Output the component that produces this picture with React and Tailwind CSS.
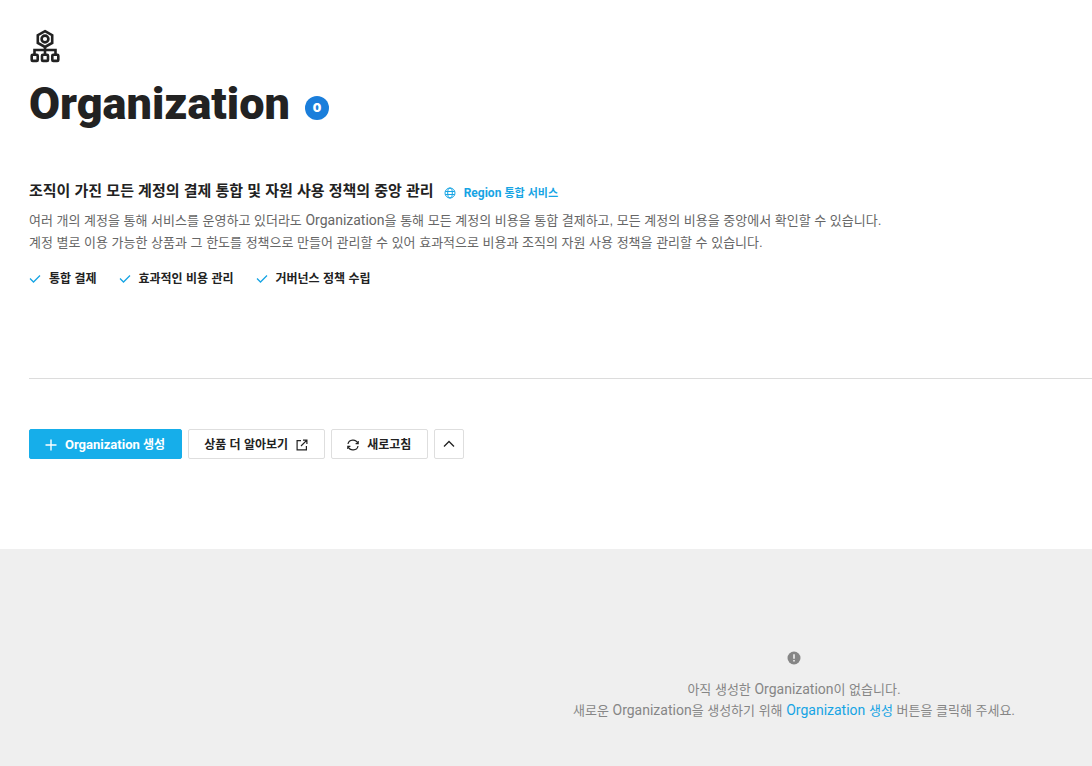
const features = ['통합 결제', '효과적인 비용 관리', '거버넌스 정책 수립'];

const buttonBase = 'flex h-[30px] items-center gap-2 rounded-xs border pt-px pr-4 pl-[15px] text-xs font-bold';
const plainButton = `${buttonBase} border-[#dedede] bg-white text-[#222]`;

function OrganizationIcon() {
  return (
    <svg width="32" height="34" viewBox="0 0 32 34" fill="none" stroke="#222" strokeWidth="2.6" aria-hidden="true">
      <path d="M16 2.200l7.200 4v7.800l-7.200 4-7.200-4V6.200z" />
      <circle cx="16" cy="10" r="3.4" />
      <path d="M16 18v7M5.500 25.500v-4.500h21v4.500" />
      <rect x="2.700" y="25.700" width="6" height="6.200" rx="1" />
      <rect x="13" y="25.700" width="6" height="6.200" rx="1" />
      <rect x="23.300" y="25.700" width="6" height="6.200" rx="1" />
    </svg>
  );
}

function GlobeIcon() {
  return (
    <svg width="12" height="12" viewBox="0 0 12 12" fill="none" stroke="currentColor" aria-hidden="true">
      <circle cx="6" cy="6" r="5" />
      <ellipse cx="6" cy="6" rx="2.300" ry="5" />
      <path d="M1.300 4.500h9.400M1.300 7.500h9.400" />
    </svg>
  );
}

function CheckIcon() {
  return (
    <svg width="12" height="12" viewBox="0 0 12 12" fill="none" stroke="#16a4e4" strokeWidth="1.300" aria-hidden="true">
      <path d="M1 5.500L4.500 9 11 2.500" />
    </svg>
  );
}

function PlusIcon() {
  return (
    <svg width="12" height="12" viewBox="0 0 12 12" fill="none" stroke="currentColor" strokeWidth="1.400" aria-hidden="true">
      <path d="M6 .5v11M.5 6h11" />
    </svg>
  );
}

function ExternalIcon() {
  return (
    <svg width="12" height="12" viewBox="0 0 12 12" fill="none" stroke="currentColor" strokeWidth="1.200" aria-hidden="true">
      <path d="M5 1.600H1.100v9.300h9.300V7M7 1.100h3.900V5M10.900 1.100L5 7" />
    </svg>
  );
}

function RefreshIcon() {
  return (
    <svg width="12" height="12" viewBox="0 0 12 12" fill="none" stroke="currentColor" strokeWidth="1.200" aria-hidden="true">
      <path d="M1 5a5 4.600 0 0 1 9.700-.8M11 7a5 4.600 0 0 1-9.700.8" />
      <path d="M11.200 2v2.600H8.600M.8 10V7.400h2.600" />
    </svg>
  );
}

function ChevronUpIcon() {
  return (
    <svg width="12" height="12" viewBox="0 0 12 12" fill="none" stroke="currentColor" strokeWidth="1.300" aria-hidden="true">
      <path d="M1 8.500l5-5 5 5" />
    </svg>
  );
}

function AlertIcon() {
  return (
    <svg width="14" height="14" viewBox="0 0 14 14" aria-hidden="true">
      <circle cx="7" cy="7" r="6.500" fill="#868686" />
      <path d="M7 3.300v4.500M7 9v1.600" stroke="#efefef" strokeWidth="1.600" />
    </svg>
  );
}

// Latin words are set in Roboto, one step larger than the Korean text around them
function Latin({ size = 'text-sm', children }) {
  return <span className={`${size} font-['Roboto',sans-serif] leading-none`}>{children}</span>;
}

export default function App() {
  return (
    <div className="min-h-screen overflow-x-hidden bg-white font-['Liberation_Sans','Noto_Sans_CJK_KR',sans-serif] text-[#222]">
      <div className="min-w-[1588px]">
        <header className="ml-[29px] border-b border-[#dcdcdc] pt-[29px] pb-[89px]">
          <OrganizationIcon />
          <div className="mt-3 flex items-center gap-[15px]">
            <h1 className="font-['Roboto',sans-serif] text-[45px] leading-[58px] font-black">Organization</h1>
            <span className="mt-2 flex size-6 items-center justify-center rounded-full bg-[#1a7edb] font-['Inter',sans-serif] text-xs font-black text-white">0</span>
          </div>
          <div className="mt-[46px] flex items-center gap-2.5">
            <h2 className="text-[15px] leading-6 font-bold">조직이 가진 모든 계정의 결제 통합 및 자원 사용 정책의 중앙 관리</h2>
            <span className="flex items-center gap-2 pt-1 text-[11px] leading-5 font-bold text-[#16a4e4]">
              <GlobeIcon />
              <span>
                <Latin size="text-xs">Region</Latin> 통합 서비스
              </span>
            </span>
          </div>
          <p className="mt-[7px] text-[13px] leading-[22px] text-[#666]">
            여러 개의 계정을 통해 서비스를 운영하고 있더라도 <Latin>Organization</Latin>을 통해 모든 계정의 비용을 통합 결제하고, 모든 계정의 비용을 중앙에서 확인할 수 있습니다.
            <br />
            계정 별로 이용 가능한 상품과 그 한도를 정책으로 만들어 관리할 수 있어 효과적으로 비용과 조직의 자원 사용 정책을 관리할 수 있습니다.
          </p>
          <ul className="mt-[15px] flex gap-[22px] text-xs leading-5 font-bold">
            {features.map((feature) => (
              <li key={feature} className="flex items-center gap-2">
                <CheckIcon />
                {feature}
              </li>
            ))}
          </ul>
        </header>

        <div className="ml-[29px] flex gap-1.5 pt-[50px] pb-[90px]">
          <button type="button" className={`${buttonBase} border-[#16aeea] bg-[#16aeea] text-white`}>
            <PlusIcon />
            <span>
              <Latin size="text-[13px]">Organization</Latin> 생성
            </span>
          </button>
          <button type="button" className={plainButton}>
            상품 더 알아보기
            <ExternalIcon />
          </button>
          <button type="button" className={plainButton}>
            <RefreshIcon />
            새로고침
          </button>
          <button type="button" aria-label="접기" className="flex size-[30px] items-center justify-center rounded-xs border border-[#dedede] bg-white text-[#222]">
            <ChevronUpIcon />
          </button>
        </div>

        <section className="flex min-h-[calc(100vh-549px)] flex-col items-center bg-[#efefef] pt-[102px] pb-11 text-center text-[13px] leading-[21px] text-[#868686]">
          <AlertIcon />
          <p className="mt-3.5">
            아직 생성한 <Latin>Organization</Latin>이 없습니다.
            <br />
            새로운 <Latin>Organization</Latin>을 생성하기 위해{' '}
            <span className="text-[#16a4e4]">
              <Latin>Organization</Latin> 생성
            </span>{' '}
            버튼을 클릭해 주세요.
          </p>
        </section>
      </div>
    </div>
  );
}
